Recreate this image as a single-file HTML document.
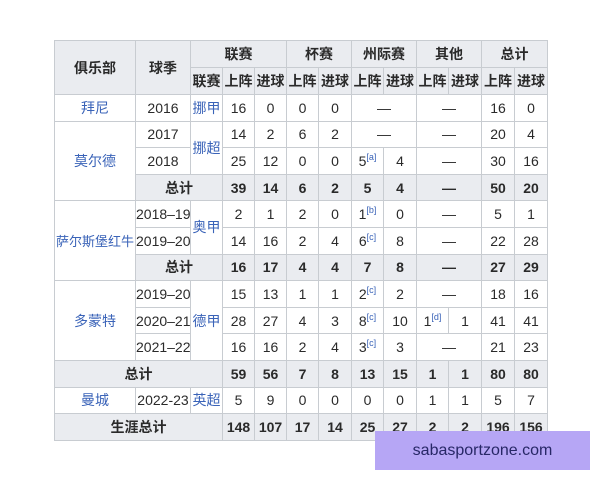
<!DOCTYPE html>
<html><head><meta charset="utf-8"><style>
html,body{margin:0;padding:0;background:#fff;width:600px;height:480px;overflow:hidden;}
table{position:absolute;left:54px;top:40px;border-collapse:collapse;table-layout:fixed;width:493px;
font-family:"Liberation Sans","Noto Sans CJK SC",sans-serif;font-size:14px;color:#2a2a2a;}
td,th{border:1px solid #c8ccd1;padding:0;text-align:center;vertical-align:middle;white-space:nowrap;overflow:hidden;}
th{background:#eaecf0;font-weight:bold;}
tr{height:26.6px;}
tr.h{height:27px;}
.t td,.t th{background:#eaecf0;font-weight:bold;}
a{color:#3a63b8;text-decoration:none;}
.c{font-size:13px;}
sup{font-size:9px;color:#3a63b8;vertical-align:6px;line-height:0;}
.wm{position:absolute;left:375px;top:431px;width:215px;height:39px;background:#b6a6f5;color:#272766;
font-family:"Liberation Sans",sans-serif;font-size:16px;line-height:39px;text-align:center;}
</style></head><body>
<table>
<colgroup><col style="width:81px"><col style="width:55px"><col style="width:32px"><col style="width:32px"><col style="width:32px"><col style="width:32px"><col style="width:33px"><col style="width:32px"><col style="width:33px"><col style="width:32px"><col style="width:33px"><col style="width:33px"><col style="width:33px"><col style="width:33px"></colgroup>
<tr class="h"><th rowspan="2">俱乐部</th><th rowspan="2">球季</th><th colspan="3">联赛</th><th colspan="2">杯赛</th><th colspan="2">州际赛</th><th colspan="2">其他</th><th colspan="2">总计</th></tr>
<tr class="h"><th>联赛</th><th>上阵</th><th>进球</th><th>上阵</th><th>进球</th><th>上阵</th><th>进球</th><th>上阵</th><th>进球</th><th>上阵</th><th>进球</th></tr>
<tr><td><a>拜尼</a></td><td>2016</td><td><a>挪甲</a></td><td>16</td><td>0</td><td>0</td><td>0</td><td colspan="2">—</td><td colspan="2">—</td><td>16</td><td>0</td></tr>
<tr><td rowspan="3"><a>莫尔德</a></td><td>2017</td><td rowspan="2"><a>挪超</a></td><td>14</td><td>2</td><td>6</td><td>2</td><td colspan="2">—</td><td colspan="2">—</td><td>20</td><td>4</td></tr>
<tr><td>2018</td><td>25</td><td>12</td><td>0</td><td>0</td><td>5<sup>[a]</sup></td><td>4</td><td colspan="2">—</td><td>30</td><td>16</td></tr>
<tr class="t"><th colspan="2">总计</th><td>39</td><td>14</td><td>6</td><td>2</td><td>5</td><td>4</td><td colspan="2">—</td><td>50</td><td>20</td></tr>
<tr><td rowspan="3" class="c"><a>萨尔斯堡红牛</a></td><td>2018–19</td><td rowspan="2"><a>奥甲</a></td><td>2</td><td>1</td><td>2</td><td>0</td><td>1<sup>[b]</sup></td><td>0</td><td colspan="2">—</td><td>5</td><td>1</td></tr>
<tr><td>2019–20</td><td>14</td><td>16</td><td>2</td><td>4</td><td>6<sup>[c]</sup></td><td>8</td><td colspan="2">—</td><td>22</td><td>28</td></tr>
<tr class="t"><th colspan="2">总计</th><td>16</td><td>17</td><td>4</td><td>4</td><td>7</td><td>8</td><td colspan="2">—</td><td>27</td><td>29</td></tr>
<tr><td rowspan="3"><a>多蒙特</a></td><td>2019–20</td><td rowspan="3"><a>德甲</a></td><td>15</td><td>13</td><td>1</td><td>1</td><td>2<sup>[c]</sup></td><td>2</td><td colspan="2">—</td><td>18</td><td>16</td></tr>
<tr><td>2020–21</td><td>28</td><td>27</td><td>4</td><td>3</td><td>8<sup>[c]</sup></td><td>10</td><td>1<sup>[d]</sup></td><td>1</td><td>41</td><td>41</td></tr>
<tr><td>2021–22</td><td>16</td><td>16</td><td>2</td><td>4</td><td>3<sup>[c]</sup></td><td>3</td><td colspan="2">—</td><td>21</td><td>23</td></tr>
<tr class="t"><th colspan="3">总计</th><td>59</td><td>56</td><td>7</td><td>8</td><td>13</td><td>15</td><td>1</td><td>1</td><td>80</td><td>80</td></tr>
<tr><td><a>曼城</a></td><td>2022-23</td><td><a>英超</a></td><td>5</td><td>9</td><td>0</td><td>0</td><td>0</td><td>0</td><td>1</td><td>1</td><td>5</td><td>7</td></tr>
<tr class="t"><th colspan="3">生涯总计</th><td>148</td><td>107</td><td>17</td><td>14</td><td>25</td><td>27</td><td>2</td><td>2</td><td>196</td><td>156</td></tr>
</table>
<div class="wm">sabasportzone.com</div>
</body></html>
